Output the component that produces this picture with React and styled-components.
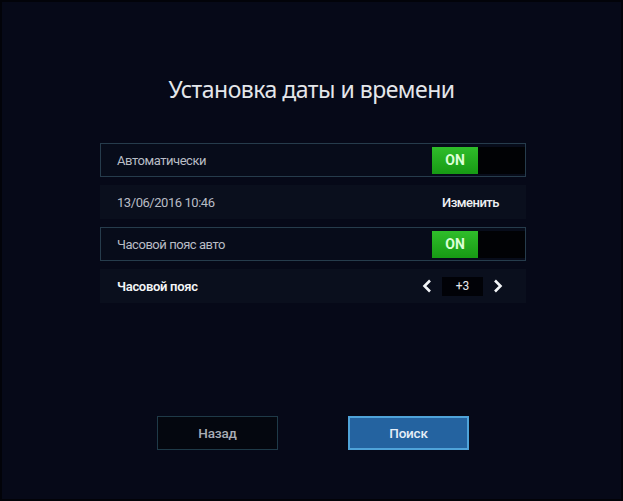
import React from 'react';
import styled, { createGlobalStyle } from 'styled-components';

const GlobalStyle = createGlobalStyle`
  html, body {
    margin: 0;
    padding: 0;
    background: #05060f;
  }
`;

const Screen = styled.div`
  width: 623px;
  height: 501px;
  box-sizing: border-box;
  border: 2px solid #020309;
  background: #060918;
  display: flex;
  flex-direction: column;
  font-family: Roboto, "Liberation Sans", sans-serif;
`;

const Title = styled.h1`
  margin: 71px 0 0;
  height: 32px;
  line-height: 32px;
  text-align: center;
  font-family: "Noto Sans", "Open Sans", sans-serif;
  font-size: 23px;
  letter-spacing: -0.5px;
  font-weight: normal;
  color: #e4e6ea;
`;

const List = styled.div`
  margin: 38px 95px 0 98px;
  display: flex;
  flex-direction: column;
  gap: 8px;
`;

const Row = styled.div`
  height: 34px;
  box-sizing: border-box;
  display: flex;
  align-items: center;
  justify-content: space-between;
  padding: 0 ${p => p.$padRight || 0}px 0 16px;
  background: ${p => (p.$framed ? '#070c1a' : '#0a0f1d')};
  border: 1px solid ${p => (p.$framed ? '#263c4c' : '#0a0f1d')};
`;

const Label = styled.span`
  font-size: 13px;
  letter-spacing: ${p => (p.$strong ? '-0.3px' : '-0.45px')};
  color: ${p => (p.$strong ? '#f4f5f7' : '#b9bdc5')};
  font-weight: ${p => (p.$strong ? 600 : 400)};
`;

const Toggle = styled.div`
  width: 93px;
  height: 27px;
  display: flex;
  background: #010205;
`;

const ToggleOn = styled.div`
  width: 46px;
  height: 100%;
  display: flex;
  align-items: center;
  justify-content: center;
  background: linear-gradient(#2fbd2a, #179a14);
  color: #dcffd6;
  font-size: 14px;
  font-weight: 700;
`;

const Action = styled.span`
  font-size: 13px;
  letter-spacing: -0.5px;
  font-weight: 500;
  color: #eef0f3;
`;

const Stepper = styled.div`
  display: flex;
  align-items: center;
  gap: 10px;
`;

const ValueBox = styled.div`
  width: 41px;
  height: 19px;
  display: flex;
  align-items: center;
  justify-content: center;
  background: #010207;
  color: #e8eaee;
  font-size: 12px;
`;

const Footer = styled.div`
  margin-top: 113px;
  display: flex;
  justify-content: center;
  gap: 70px;
  padding-left: 3px;
`;

const Button = styled.div`
  width: 121px;
  height: 34px;
  box-sizing: border-box;
  display: flex;
  align-items: center;
  justify-content: center;
  font-size: 13.5px;
  font-weight: 500;
  letter-spacing: -0.2px;
  border: ${p => (p.$active ? '2px solid #4fa3d9' : '1px solid #1f3a48')};
  background: ${p => (p.$active ? '#2463a0' : '#04070f')};
  color: ${p => (p.$active ? '#e6eef7' : '#a8adb6')};
`;

const Chevron = ({ dir }) => (
  <svg width="10" height="14" viewBox="0 0 10 14">
    <path
      d={dir === 'left' ? 'M8 1.5 L2.5 7 L8 12.5' : 'M2 1.5 L7.5 7 L2 12.5'}
      fill="none"
      stroke="#f2f4f7"
      strokeWidth="2.6"
    />
  </svg>
);

const Switch = () => (
  <Toggle>
    <ToggleOn>ON</ToggleOn>
  </Toggle>
);

const App = () => (
  <Screen>
    <GlobalStyle />
    <Title>Установка даты и времени</Title>
    <List>
      <Row $framed>
        <Label>Автоматически</Label>
        <Switch />
      </Row>
      <Row $padRight={26}>
        <Label>13/06/2016 10:46</Label>
        <Action>Изменить</Action>
      </Row>
      <Row $framed>
        <Label>Часовой пояс авто</Label>
        <Switch />
      </Row>
      <Row $padRight={22}>
        <Label $strong>Часовой пояс</Label>
        <Stepper>
          <Chevron dir="left" />
          <ValueBox>+3</ValueBox>
          <Chevron dir="right" />
        </Stepper>
      </Row>
    </List>
    <Footer>
      <Button>Назад</Button>
      <Button $active>Поиск</Button>
    </Footer>
  </Screen>
);

export default App;
